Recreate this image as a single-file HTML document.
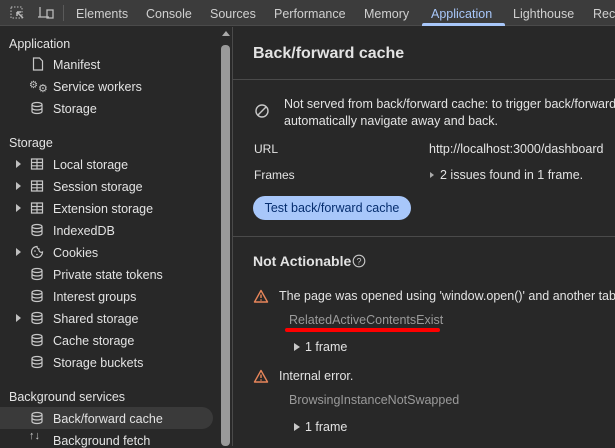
<!DOCTYPE html>
<html><head><meta charset="utf-8"><style>
*{margin:0;padding:0;box-sizing:border-box}
body{width:615px;height:446px;overflow:hidden;background:#282828;font-family:"Liberation Sans",sans-serif;font-size:12.5px;color:#e3e3e3;position:relative}
.a{position:absolute;white-space:nowrap}
.tb{position:absolute;left:0;top:0;width:615px;height:26px;background:#3c3c3c;border-bottom:1px solid #4a4a4a}
.tab{position:absolute;top:7px;color:#d0d0d0;font-size:12.5px}
.ic{position:absolute;width:14px;height:14px}
.muted{color:#9a9a9a}
.hdr{color:#e3e3e3}
.arr{position:absolute;width:0;height:0;border-top:4px solid transparent;border-bottom:4px solid transparent;border-left:5px solid #c0c0c0}
</style></head><body>
<div class="tb"></div>
<svg class="a" style="left:10px;top:6px" width="16" height="14" viewBox="0 0 16 14"><rect x="1" y="1" width="11" height="11" fill="none" stroke="#bbb" stroke-dasharray="1.5 1.5"/><path d="M7 6 L13 12 M7 6 H11 M7 6 V10" stroke="#bbb" stroke-width="1.5" fill="none"/></svg>
<svg class="a" style="left:37px;top:6px" width="18" height="14" viewBox="0 0 18 14"><path d="M3 1 V11 H12 M1 11 H12" stroke="#bbb" stroke-width="1.3" fill="none"/><rect x="10" y="4" width="6" height="8" fill="none" stroke="#bbb" stroke-width="1.3"/></svg>
<div class="a" style="left:63px;top:5px;width:1px;height:16px;background:#5a5a5a"></div>
<div class="tab" style="left:76px">Elements</div>
<div class="tab" style="left:146px">Console</div>
<div class="tab" style="left:210px">Sources</div>
<div class="tab" style="left:274px">Performance</div>
<div class="tab" style="left:364px">Memory</div>
<div class="tab" style="left:431px;color:#a8c7fa">Application</div>
<div class="a" style="left:422px;top:23px;width:83px;height:3px;background:#a8c7fa;border-radius:2px 2px 0 0"></div>
<div class="tab" style="left:513px">Lighthouse</div>
<div class="tab" style="left:593px">Rec</div>

<div class="a" style="left:220px;top:27px;width:11px;height:419px;background:#2a2a2a"></div>
<div class="a" style="left:222px;top:31px;width:0;height:0;border-left:4px solid transparent;border-right:4px solid transparent;border-bottom:5px solid #aaa"></div>
<div class="a" style="left:221px;top:45px;width:9px;height:401px;background:#9a9a9a;border-radius:4px"></div>
<div class="a" style="left:232px;top:27px;width:1px;height:419px;background:#4a4a4a"></div>

<div class="a hdr" style="left:9px;top:37px">Application</div>
<svg class="ic" style="left:31px;top:57px" viewBox="0 0 14 14"><path d="M2.5 1 H8.5 L11.5 4 V13 H2.5 Z" fill="none" stroke="#c8c8c8" stroke-width="1.2"/></svg>
<div class="a" style="left:53px;top:58px">Manifest</div>
<div class="a" style="left:29px;top:78px;font-size:10px;color:#c8c8c8">⚙<span style="font-size:11px;position:relative;top:4px">⚙</span></div>
<div class="a" style="left:53px;top:80px">Service workers</div>
<div class="a" style="left:53px;top:102px">Storage</div>
<div class="a hdr" style="left:9px;top:136px">Storage</div>
<div class="a" style="left:53px;top:158px">Local storage</div>
<div class="a" style="left:53px;top:180px">Session storage</div>
<div class="a" style="left:53px;top:202px">Extension storage</div>
<div class="a" style="left:53px;top:224px">IndexedDB</div>
<div class="a" style="left:53px;top:246px">Cookies</div>
<div class="a" style="left:53px;top:268px">Private state tokens</div>
<div class="a" style="left:53px;top:290px">Interest groups</div>
<div class="a" style="left:53px;top:312px">Shared storage</div>
<div class="a" style="left:53px;top:334px">Cache storage</div>
<div class="a" style="left:53px;top:356px">Storage buckets</div>
<div class="a hdr" style="left:9px;top:390px">Background services</div>
<div class="a" style="left:0;top:407px;width:213px;height:22px;background:#3a3a3a;border-radius:0 11px 11px 0"></div>
<div class="a" style="left:53px;top:412px">Back/forward cache</div>
<div class="a" style="left:29px;top:430px;font-size:11px;color:#c8c8c8">↑↓</div>
<div class="a" style="left:53px;top:434px">Background fetch</div>

<div class="arr" style="left:16px;top:160px"></div>
<div class="arr" style="left:16px;top:182px"></div>
<div class="arr" style="left:16px;top:204px"></div>
<div class="arr" style="left:16px;top:248px"></div>
<div class="arr" style="left:16px;top:314px"></div>

<svg class="ic" style="left:30px;top:157px" viewBox="0 0 14 14"><path d="M1.5 2 H12.5 V12 H1.5 Z M1.5 5.5 H12.5 M1.5 8.8 H12.5 M7 2 V12" fill="none" stroke="#c8c8c8" stroke-width="1.2"/></svg>
<svg class="ic" style="left:30px;top:179px" viewBox="0 0 14 14"><path d="M1.5 2 H12.5 V12 H1.5 Z M1.5 5.5 H12.5 M1.5 8.8 H12.5 M7 2 V12" fill="none" stroke="#c8c8c8" stroke-width="1.2"/></svg>
<svg class="ic" style="left:30px;top:201px" viewBox="0 0 14 14"><path d="M1.5 2 H12.5 V12 H1.5 Z M1.5 5.5 H12.5 M1.5 8.8 H12.5 M7 2 V12" fill="none" stroke="#c8c8c8" stroke-width="1.2"/></svg>
<svg class="ic" style="left:30px;top:245px" viewBox="0 0 14 14"><path d="M7 1.5 A5.5 5.5 0 1 0 12.5 7 A2.5 2.5 0 0 1 9 4 A2.5 2.5 0 0 1 7 1.5 Z" fill="none" stroke="#c8c8c8" stroke-width="1.2"/><circle cx="5" cy="6" r=".8" fill="#c8c8c8"/><circle cx="7" cy="9.5" r=".8" fill="#c8c8c8"/></svg>
<svg width="0" height="0" style="position:absolute"><defs><g id="db"><ellipse cx="7" cy="3.5" rx="5" ry="2" fill="none" stroke="#c8c8c8" stroke-width="1.2"/><path d="M2 3.5 V10.5 A5 2 0 0 0 12 10.5 V3.5 M2 7 A5 2 0 0 0 12 7" fill="none" stroke="#c8c8c8" stroke-width="1.2"/></g></defs></svg>
<svg class="ic" style="left:30px;top:101px" viewBox="0 0 14 14"><use href="#db"/></svg>
<svg class="ic" style="left:30px;top:223px" viewBox="0 0 14 14"><use href="#db"/></svg>
<svg class="ic" style="left:30px;top:267px" viewBox="0 0 14 14"><use href="#db"/></svg>
<svg class="ic" style="left:30px;top:289px" viewBox="0 0 14 14"><use href="#db"/></svg>
<svg class="ic" style="left:30px;top:311px" viewBox="0 0 14 14"><use href="#db"/></svg>
<svg class="ic" style="left:30px;top:333px" viewBox="0 0 14 14"><use href="#db"/></svg>
<svg class="ic" style="left:30px;top:355px" viewBox="0 0 14 14"><use href="#db"/></svg>
<svg class="ic" style="left:30px;top:411px" viewBox="0 0 14 14"><use href="#db"/></svg>

<div class="a" style="left:253px;top:45px;font-size:16px;font-weight:bold;color:#e3e3e3">Back/forward cache</div>
<div class="a" style="left:233px;top:79px;width:382px;height:1px;background:#4a4a4a"></div>
<svg class="a" style="left:254px;top:103px" width="16" height="16" viewBox="0 0 16 16"><circle cx="8" cy="8" r="6" fill="none" stroke="#c8c8c8" stroke-width="1.4"/><path d="M4 12 L12 4" stroke="#c8c8c8" stroke-width="1.4"/></svg>
<div class="a" style="left:284px;top:97px">Not served from back/forward cache: to trigger back/forward c</div>
<div class="a" style="left:284px;top:114px">automatically navigate away and back.</div>
<div class="a" style="left:254px;top:142px;font-size:12px">URL</div>
<div class="a" style="left:429px;top:142px">http://localhost:3000/dashboard</div>
<div class="a" style="left:254px;top:168px;font-size:12px">Frames</div>
<div class="a" style="left:430px;top:172px;width:0;height:0;border-top:3.5px solid transparent;border-bottom:3.5px solid transparent;border-left:4px solid #aaa"></div>
<div class="a" style="left:440px;top:168px">2 issues found in 1 frame.</div>
<div class="a" style="left:253px;top:196px;width:158px;height:24px;background:#a8c7fa;border-radius:12px;color:#062e6f;font-size:12.5px;line-height:24px;text-align:center">Test back/forward cache</div>
<div class="a" style="left:233px;top:236px;width:382px;height:1px;background:#4a4a4a"></div>
<div class="a" style="left:253px;top:253px;font-size:14px;font-weight:bold">Not Actionable</div>
<svg class="a" style="left:352px;top:254px" width="14" height="14" viewBox="0 0 14 14"><circle cx="7" cy="7" r="5.8" fill="none" stroke="#c8c8c8" stroke-width="1.1"/><text x="7" y="10.3" font-size="9" text-anchor="middle" fill="#c8c8c8" font-family="Liberation Sans">?</text></svg>
<svg class="a" style="left:253px;top:289px" width="16" height="14" viewBox="0 0 16 14"><path d="M8 1.5 L14.5 13 H1.5 Z" fill="none" stroke="#e8865a" stroke-width="1.4" stroke-linejoin="round"/><path d="M8 5.5 V9" stroke="#e8865a" stroke-width="1.4"/><circle cx="8" cy="11" r=".8" fill="#e8865a"/></svg>
<div class="a" style="left:279px;top:289px">The page was opened using 'window.open()' and another tab ha</div>
<div class="a muted" style="left:289px;top:313px">RelatedActiveContentsExist</div>
<div class="a" style="left:285px;top:328px;width:155px;height:4px;background:#ff0000;border-radius:2px"></div>
<div class="a" style="left:294px;top:343px;width:0;height:0;border-top:4px solid transparent;border-bottom:4px solid transparent;border-left:6px solid #c8c8c8"></div>
<div class="a" style="left:305px;top:340px">1 frame</div>
<svg class="a" style="left:253px;top:369px" width="16" height="14" viewBox="0 0 16 14"><path d="M8 1.5 L14.5 13 H1.5 Z" fill="none" stroke="#e8865a" stroke-width="1.4" stroke-linejoin="round"/><path d="M8 5.5 V9" stroke="#e8865a" stroke-width="1.4"/><circle cx="8" cy="11" r=".8" fill="#e8865a"/></svg>
<div class="a" style="left:279px;top:369px">Internal error.</div>
<div class="a muted" style="left:289px;top:393px">BrowsingInstanceNotSwapped</div>
<div class="a" style="left:294px;top:423px;width:0;height:0;border-top:4px solid transparent;border-bottom:4px solid transparent;border-left:6px solid #c8c8c8"></div>
<div class="a" style="left:305px;top:420px">1 frame</div>
</body></html>
